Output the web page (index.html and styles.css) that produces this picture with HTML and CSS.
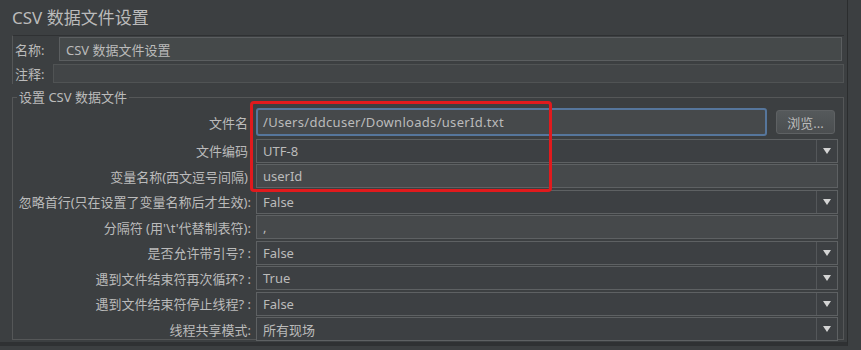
FILE: index.html
```html
<!DOCTYPE html>
<html>
<head>
    <meta charset="utf-8">
    <title>CSV 数据文件设置</title>
    <link rel="stylesheet" href="styles.css">
</head>
<body>
    <div class="panel">
        <h1 class="title">CSV 数据文件设置</h1>

        <div class="meta">
            <div class="meta-row">
                <label>名称:</label>
                <div class="field name-field">CSV 数据文件设置</div>
            </div>
            <div class="meta-row comment-row">
                <label>注释:</label>
                <div class="field comment-field"></div>
            </div>
        </div>

        <fieldset class="group">
            <legend>设置 CSV 数据文件</legend>
            <div class="form">
                <label class="pad">文件名</label>
                <div class="file-row">
                    <div class="field text focused">/Users/ddcuser/Downloads/userId.txt</div>
                    <button class="browse">浏览...</button>
                </div>

                <label class="pad">文件编码</label>
                <div class="field combo"><span>UTF-8</span><i class="arrow"></i></div>

                <label class="pad">变量名称(西文逗号间隔)</label>
                <div class="field text">userId</div>

                <label>忽略首行(只在设置了变量名称后才生效):</label>
                <div class="field combo"><span>False</span><i class="arrow"></i></div>

                <label>分隔符 (用'\t'代替制表符):</label>
                <div class="field text">,</div>

                <label>是否允许带引号? :</label>
                <div class="field combo"><span>False</span><i class="arrow"></i></div>

                <label>遇到文件结束符再次循环? :</label>
                <div class="field combo"><span>True</span><i class="arrow"></i></div>

                <label>遇到文件结束符停止线程? :</label>
                <div class="field combo"><span>False</span><i class="arrow"></i></div>

                <label>线程共享模式:</label>
                <div class="field combo"><span>所有现场</span><i class="arrow"></i></div>

                <div class="highlight"></div>
            </div>
        </fieldset>
    </div>
</body>
</html>
```

FILE: styles.css
```css
body {
    margin: 0;
    padding: 0;
    background: #3c3f41;
    color: #bbbbbb;
    font-family: "Noto Sans", "Noto Sans CJK SC", sans-serif;
    font-size: 13px;
    width: 861px;
    height: 350px;
    overflow: hidden;
}

.panel {
    height: 346px;
    margin-right: 13px;
    padding: 0 0 0 12px;
    border-left: 4px solid #313335;
    border-right: 1px solid #2b2d2e;
    border-bottom: 4px solid #2f3133;
    box-sizing: border-box;
    width: 852px;
    margin-left: -4px;
}

.title {
    margin: 0;
    padding: 6px 0 0 0;
    height: 29px;
    font-size: 17px;
    font-weight: normal;
    line-height: 24px;
    color: #bbbbbb;
}

.meta {
    border-top: 1px solid #2f3133;
    border-left: 1px solid #555758;
    margin-right: 3px;
    padding-top: 1px;
}

.meta-row {
    display: flex;
    align-items: center;
    height: 24px;
}

.meta-row label {
    width: 44px;
    padding-left: 2px;
    flex: none;
}

.comment-row {
    height: 21px;
    margin-top: 2px;
}

.comment-row label {
    width: 38px;
}

.field {
    box-sizing: border-box;
    border: 1px solid #5e6163;
    background: #45494a;
    display: flex;
    align-items: center;
    padding-left: 6px;
    white-space: nowrap;
}

.name-field {
    flex: 1;
    height: 24px;
    margin-right: 2px;
    border-color: #5b5e60;
}

.comment-field {
    flex: 1;
    height: 19px;
    border-color: #505354;
    background: #424547;
}

.group {
    margin: 6px 3px 0 0;
    padding: 3px 5px 0 0;
    border: 1px solid #555758;
    height: 250px;
    box-sizing: border-box;
}

.group legend {
    padding: 0 2px;
    margin-left: 4px;
    line-height: 14px;
}

.form {
    position: relative;
    display: grid;
    grid-template-columns: 238px 1fr;
    grid-template-rows: 30px;
    grid-auto-rows: 24px;
    row-gap: 1.5px;
    column-gap: 5px;
}

.form label {
    text-align: right;
    align-self: center;
    white-space: nowrap;
}

.form label.pad {
    padding-right: 3px;
}

.file-row {
    display: flex;
    align-items: center;
    gap: 9px;
}

.text {
    background: #46494b;
}

.focused {
    flex: 1;
    height: 28px;
    border: 2px solid #56769c;
    border-radius: 3px;
    padding-left: 5px;
    max-width: 511px;
    letter-spacing: 0.3px;
}

.browse {
    width: 59px;
    height: 24px;
    padding: 0;
    font-family: inherit;
    font-size: 13px;
    color: #bbbbbb;
    background: linear-gradient(#55595b, #4b4e50);
    border: 1px solid #5e6163;
    border-radius: 3px;
}

.combo {
    background: #3d4043;
    justify-content: space-between;
    padding-right: 0;
}

.arrow {
    width: 20px;
    height: 100%;
    border-left: 1px solid #54575a;
    position: relative;
}

.arrow::after {
    content: "";
    position: absolute;
    left: 6px;
    top: 8px;
    border-left: 4px solid transparent;
    border-right: 4px solid transparent;
    border-top: 6px solid #d4d4d4;
}

.highlight {
    position: absolute;
    left: 237px;
    top: -6px;
    width: 302px;
    height: 91px;
    border: 3px solid #e11a1d;
    border-radius: 4px;
    box-sizing: border-box;
    pointer-events: none;
}
```
